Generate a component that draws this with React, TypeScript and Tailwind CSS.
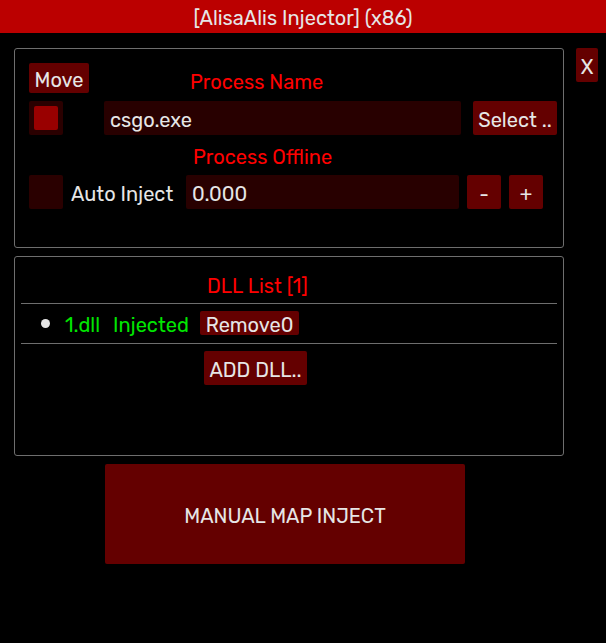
import React from "react";

const F = { fontFamily: "Rubik, Inter, 'Open Sans', sans-serif" };

export default function App() {
  return (
    <div className="w-[606px] h-[643px] bg-black text-[#e6e6e6] text-[20px] leading-none" style={F}>
      <div className="h-[33px] bg-[#bb0000] flex items-center justify-center pt-[3px]">
        [AlisaAlis Injector] (x86)
      </div>
      <div className="flex">
        <div className="ml-[14px] w-[550px]">
          {/* panel 1 */}
          <div className="mt-[15px] h-[200px] border border-[#6e6e6e] rounded-[3px] pl-[14px] pt-[14px]">
            <div className="flex items-center h-[30px]">
              <div className="w-[60px] h-[30px] bg-[#640000] rounded-[2px] flex items-center justify-center pt-[3px]">Move</div>
              <div className="ml-[101px] text-[#ff0000] mt-[7px]">Process Name</div>
            </div>
            <div className="flex items-center mt-[8px] h-[34px]">
              <div className="w-[34px] h-[34px] bg-[#2a0000] rounded-[2px] flex items-center justify-center">
                <div className="w-[24px] h-[24px] bg-[#990000] rounded-[2px]" />
              </div>
              <div className="ml-[41px] w-[357px] h-[34px] bg-[#280000] rounded-[2px] flex items-center pl-[6px] pt-[3px]">csgo.exe</div>
              <div className="ml-[12px] w-[84px] h-[34px] bg-[#640000] rounded-[2px] flex items-center justify-center pt-[3px]">Select ..</div>
            </div>
            <div className="h-[40px] flex items-center pt-[3px]">
              <div className="ml-[164px] text-[#ff0000]">Process Offline</div>
            </div>
            <div className="flex items-center h-[34px]">
              <div className="w-[34px] h-[34px] bg-[#2a0000] rounded-[2px]" />
              <div className="ml-[8px] w-[115px] pt-[3px]">Auto Inject</div>
              <div className="w-[273px] h-[34px] bg-[#280000] rounded-[2px] flex items-center pl-[6px] pt-[3px]">0.000</div>
              <div className="ml-[8px] w-[34px] h-[34px] bg-[#640000] rounded-[2px] flex items-center justify-center pt-[3px]">-</div>
              <div className="ml-[8px] w-[34px] h-[34px] bg-[#640000] rounded-[2px] flex items-center justify-center pt-[3px]">+</div>
            </div>
          </div>
          {/* panel 2 */}
          <div className="mt-[8px] h-[200px] border border-[#6e6e6e] rounded-[3px] px-[6px]">
            <div className="h-[46px] flex items-center text-[#ff0000] pt-[12px]">
              <span className="ml-[186px]">DLL List [1]</span>
            </div>
            <div className="h-px bg-[#6e6e6e]" />
            <div className="flex items-center h-[24px] mt-[7px]">
              <div className="ml-[20px] w-[9px] h-[9px] rounded-full bg-[#e6e6e6]" />
              <div className="ml-[15px] w-[48px] text-[#00e600] pt-[3px]">1.dll</div>
              <div className="w-[87px] text-[#00e600] pt-[3px]">Injected</div>
              <div className="w-[99px] h-[24px] bg-[#640000] rounded-[2px] flex items-center justify-center pt-[3px]">Remove0</div>
            </div>
            <div className="h-px bg-[#6e6e6e] mt-[8px]" />
            <div className="flex mt-[7px]">
              <div className="ml-[183px] w-[103px] h-[34px] bg-[#640000] rounded-[2px] flex items-center justify-center pt-[3px]">ADD DLL..</div>
            </div>
          </div>
          <div className="mt-[8px] ml-[91px] w-[360px] h-[100px] bg-[#640000] rounded-[2px] flex items-center justify-center pt-[3px]">
            MANUAL MAP INJECT
          </div>
        </div>
        <div className="ml-[12px] mt-[15px] w-[22px] h-[34px] bg-[#640000] rounded-[2px] flex items-center justify-center pt-[3px]">X</div>
      </div>
    </div>
  );
}
